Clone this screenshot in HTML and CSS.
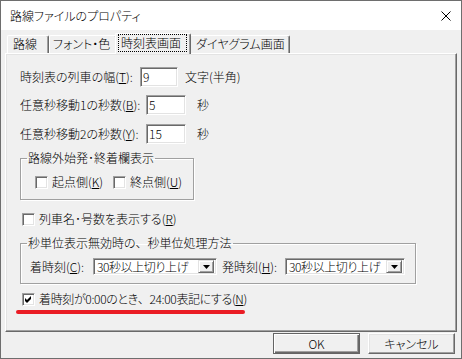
FILE: index.html
```html
<!DOCTYPE html>
<html lang="ja">
<head>
<meta charset="utf-8">
<title>路線ファイルのプロパティ</title>
<link rel="stylesheet" href="styles.css">
</head>
<body>
<div class="window">
  <div class="titlebar">
    <span class="title">路線ファイルのプロパティ</span>
    <svg class="close" width="10" height="10" viewBox="0 0 10 10"><path d="M0.5 0.5L9.5 9.5M9.5 0.5L0.5 9.5" stroke="#000" stroke-width="1" fill="none"/></svg>
  </div>
  <div class="tabstrip">
    <div class="tab tab-1">路線</div>
    <div class="tab tab-2">フォント・色</div>
    <div class="tab tab-active"><span class="focus">時刻表画面</span></div>
    <div class="tab tab-4">ダイヤグラム画面</div>
  </div>
  <div class="panel">
    <div class="row row-1">
      <span class="label label-w1">時刻表の列車の幅(<u>T</u>):</span>
      <span class="edit edit-w1">9</span>
      <span class="suffix suffix-1">文字(半角)</span>
    </div>
    <div class="row row-2">
      <span class="label label-w2">任意秒移動1の秒数(<u>B</u>):</span>
      <span class="edit edit-w2">5</span>
      <span class="suffix suffix-2">秒</span>
    </div>
    <div class="row row-3">
      <span class="label label-w2">任意秒移動2の秒数(<u>Y</u>):</span>
      <span class="edit edit-w2">15</span>
      <span class="suffix suffix-2">秒</span>
    </div>
    <fieldset class="group group-1">
      <legend class="group-title gt-1">路線外始発･終着欄表示</legend>
      <div class="check-row">
        <label class="check check-first"><span class="cb"></span><span>起点側(<u>K</u>)</span></label>
        <label class="check"><span class="cb"></span><span>終点側(<u>U</u>)</span></label>
      </div>
    </fieldset>
    <label class="check check-line check-r"><span class="cb"></span><span>列車名･号数を表示する(<u>R</u>)</span></label>
    <fieldset class="group group-2">
      <legend class="group-title gt-2">秒単位表示無効時の<span class="wide">、</span>秒単位処理方法</legend>
      <div class="combo-row">
        <span class="clabel">着時刻(<u>C</u>):</span>
        <span class="combo combo-1"><span class="combo-text">30秒以上切り上げ</span><span class="drop"><svg width="7" height="4" viewBox="0 0 7 4"><polygon points="0,0 7,0 3.5,4" fill="#000"/></svg></span></span>
        <span class="clabel clabel-2">発時刻(<u>H</u>):</span>
        <span class="combo combo-2"><span class="combo-text">30秒以上切り上げ</span><span class="drop"><svg width="7" height="4" viewBox="0 0 7 4"><polygon points="0,0 7,0 3.5,4" fill="#000"/></svg></span></span>
      </div>
    </fieldset>
    <label class="check check-line check-n"><span class="cb cb-on"><svg width="9" height="9" viewBox="0 0 9 9"><polygon points="1,3 3,5 7,1 7,4 3,8 1,6" fill="#000"/></svg></span><span class="tight">着時刻が0:00のとき<span class="wide">、</span>24:00表記にする(<u>N</u>)</span></label>
    <div class="redline"></div>
  </div>
  <div class="buttonbar">
    <div class="btn btn-default">OK</div>
    <div class="btn">キャンセル</div>
  </div>
</div>
</body>
</html>
```

FILE: styles.css
```css
* { box-sizing: border-box; }
html, body { margin: 0; padding: 0; }
body {
  width: 462px;
  height: 359px;
  overflow: hidden;
  background: #f0f0f0;
  font-family: "Noto Sans CJK JP", "Noto Sans", sans-serif;
  font-size: 12px;
  font-weight: 300;
  line-height: 14px;
  color: #000;
  font-feature-settings: "palt";
}
u { text-decoration-thickness: 1px; text-underline-offset: 1px; }
.wide { font-feature-settings: normal; }
.tight { letter-spacing: -0.35px; }

.window {
  width: 462px;
  height: 359px;
  border: 1px solid #6e6e6e;
  background: #f0f0f0;
  display: flex;
  flex-direction: column;
}

.titlebar {
  flex: none;
  height: 29px;
  background: #fff;
  display: flex;
  align-items: center;
  justify-content: space-between;
  padding: 0 10px 0 9px;
}
.close { display: block; }

.tabstrip {
  flex: none;
  height: 23px;
  display: flex;
  align-items: flex-end;
  padding-left: 6px;
}
.tab {
  height: 18px;
  border-top: 1px solid #fff;
  border-left: 1px solid #fff;
  border-right: 1px solid #696969;
  border-radius: 2px 2px 0 0;
  box-shadow: inset -1px 0 0 #a0a0a0;
  background: #f0f0f0;
  padding-left: 5px;
  line-height: 16px;
  white-space: nowrap;
}
.tab-1 { width: 42px; }
.tab-2 { width: 68px; padding-left: 3px; }
.tab-4 { width: 101px; padding-left: 6px; }
.tab-active {
  position: relative;
  z-index: 1;
  width: 76px;
  height: 21px;
  margin: 0 -2px -1px -2px;
  padding: 0 0 0 2px;
}
.focus {
  display: block;
  width: 69px;
  height: 18px;
  border: 1px dotted #000;
  padding-left: 2px;
  line-height: 15px;
}

.panel {
  flex: none;
  width: 452px;
  height: 279px;
  margin-left: 4px;
  border-top: 1px solid #fff;
  border-left: 1px solid #fff;
  border-right: 1px solid #696969;
  border-bottom: 1px solid #696969;
  box-shadow: inset -1px -1px 0 #a0a0a0, inset 1px 1px 0 #e3e3e3;
  padding: 13px 0 0 14px;
  display: flex;
  flex-direction: column;
  align-items: flex-start;
}

.row {
  display: flex;
  align-items: center;
  height: 20px;
}
.row-2 { margin-top: 8px; }
.row-3 { margin-top: 9px; }
.label { white-space: nowrap; }
.label-w1 { width: 120px; }
.label-w2 { width: 126px; }
.edit {
  height: 20px;
  background: #fff;
  border: 1px solid;
  border-color: #a0a0a0 #fff #fff #a0a0a0;
  box-shadow: inset 1px 1px 0 #696969, inset -1px -1px 0 #e3e3e3;
  padding-left: 2px;
  line-height: 18px;
}
.edit-w1 { width: 38px; }
.edit-w2 { width: 40px; }
.suffix-1 { margin-left: 7px; }
.suffix-2 { margin-left: 11px; }

.group {
  margin: 0;
  min-width: 0;
  border: 1px solid #a0a0a0;
  box-shadow: inset 1px 1px 0 #fff, 1px 1px 0 #fff;
}
.group-title {
  padding: 0 1px;
  line-height: 14px;
  white-space: nowrap;
}
.group-1 {
  width: 174px;
  margin-top: 7px;
  padding: 10px 0 10px 14px;
}
.gt-1 { margin-left: -8px; }
.group-2 {
  width: 396px;
  margin-top: 10px;
  padding: 8px 0 8px 9px;
}
.gt-2 { margin-left: -3px; }

.check-row { display: flex; height: 14px; }
.check {
  display: flex;
  align-items: center;
  height: 14px;
  white-space: nowrap;
}
.check-first { width: 78px; }
.cb {
  flex: none;
  width: 13px;
  height: 13px;
  margin-right: 4px;
  background: #fff;
  border: 1px solid;
  border-color: #a0a0a0 #fff #fff #a0a0a0;
  box-shadow: inset 1px 1px 0 #696969, inset -1px -1px 0 #e3e3e3;
  display: flex;
  align-items: center;
  justify-content: center;
}
.cb svg { display: block; }
.check-line { margin-left: 2px; }
.check-r { margin-top: 12px; }
.check-n { margin-top: 8px; }

.combo-row { display: flex; align-items: center; height: 17px; }
.clabel { width: 63px; white-space: nowrap; }
.clabel-2 { margin-left: 5px; }
.combo {
  display: flex;
  align-items: center;
  height: 17px;
  background: #fff;
  border: 1px solid;
  border-color: #a0a0a0 #fff #fff #a0a0a0;
  box-shadow: inset 1px 1px 0 #696969, inset -1px -1px 0 #e3e3e3;
  padding: 0 2px 0 3px;
}
.combo-1 { width: 124px; }
.combo-2 { width: 120px; }
.combo-text { flex: 1; white-space: nowrap; line-height: 13px; letter-spacing: -0.4px; }
.drop {
  flex: none;
  width: 16px;
  height: 13px;
  background: #f0f0f0;
  border: 1px solid;
  border-color: #e3e3e3 #696969 #696969 #e3e3e3;
  box-shadow: inset 1px 1px 0 #fff, inset -1px -1px 0 #a0a0a0;
  display: flex;
  align-items: center;
  justify-content: center;
}
.drop svg { display: block; }

.redline {
  width: 229px;
  height: 4px;
  margin: 4px 0 0 -4px;
  border-radius: 2px;
  background: #ea1c24;
}

.buttonbar {
  flex: none;
  display: flex;
  justify-content: flex-end;
  gap: 8px;
  padding: 1px 6px 0 0;
}
.btn {
  width: 87px;
  height: 21px;
  background: #f0f0f0;
  border: 1px solid;
  border-color: #fff #696969 #696969 #fff;
  box-shadow: inset -1px -1px 0 #a0a0a0, inset 1px 1px 0 #e3e3e3;
  text-align: center;
  line-height: 19px;
}
.btn-default {
  border-color: #646464;
  box-shadow: inset 1px 1px 0 #fff, inset -1px -1px 0 #696969, inset -2px -2px 0 #a0a0a0;
}
```
